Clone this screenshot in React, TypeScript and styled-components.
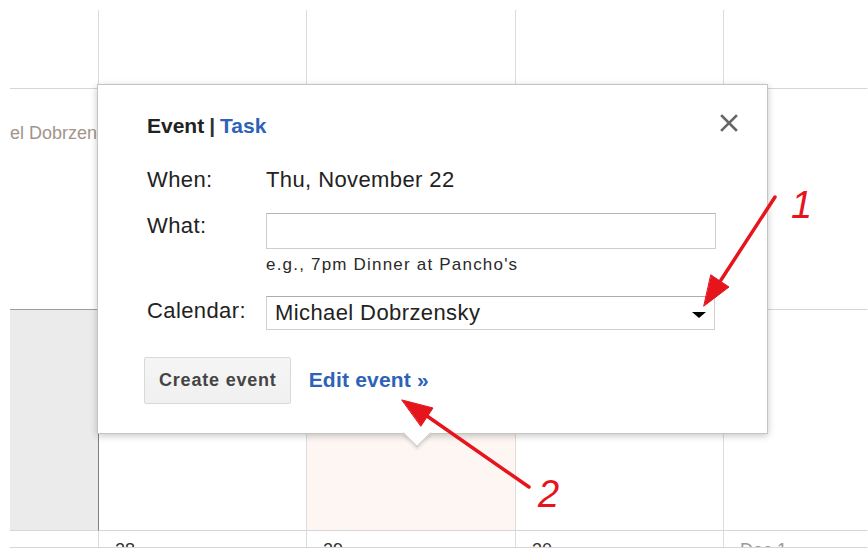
import React from 'react';
import styled, { createGlobalStyle } from 'styled-components';

const GlobalStyle = createGlobalStyle`
  html, body {
    margin: 0;
    padding: 0;
    background: #ffffff;
  }
  body {
    width: 868px;
    height: 548px;
    overflow: hidden;
    font-family: "Liberation Sans", Arial, sans-serif;
    color: #222;
  }
`;

type Tone = 'plain' | 'muted' | 'today';

const weeks: { tone?: Tone; day?: string; dim?: boolean; chip?: string; last?: boolean }[][] = [
  [{}, {}, {}, {}, { last: true }],
  [{ chip: 'Michael Dobrzensky' }, {}, {}, {}, { last: true }],
  [{ tone: 'muted' }, {}, { tone: 'today' }, {}, { last: true }],
  [{}, { day: '28' }, { day: '29' }, { day: '30' }, { day: 'Dec 1', dim: true, last: true }],
];

export default function App() {
  return (
    <>
      <GlobalStyle />
      <Page>
        <MonthGrid>
          {weeks.map((week, w) =>
            week.map((cell, d) => (
              <Cell key={`${w}-${d}`} $tone={cell.tone} $last={cell.last}>
                {cell.chip && <EventChip>{cell.chip}</EventChip>}
                {cell.day && <DayNumber $dim={cell.dim}>{cell.day}</DayNumber>}
              </Cell>
            ))
          )}
        </MonthGrid>

        <Bubble>
          <BubbleHeader>
            <Tabs>
              <ActiveTab>Event</ActiveTab>
              <TabDivider>|</TabDivider>
              <TabLink>Task</TabLink>
            </Tabs>
            <CloseButton aria-label="Close">
              <svg width="20" height="20" viewBox="0 0 20 20">
                <path d="M3 3 L17 17 M17 3 L3 17" stroke="#666" strokeWidth="2.6" strokeLinecap="square" />
              </svg>
            </CloseButton>
          </BubbleHeader>

          <FieldRow $mt={29}>
            <Label>When:</Label>
            <Value>Thu, November 22</Value>
          </FieldRow>

          <FieldRow $mt={20}>
            <Label>What:</Label>
            <TextInput type="text" />
          </FieldRow>

          <FieldRow $mt={6}>
            <span />
            <Hint>e.g., 7pm Dinner at Pancho's</Hint>
          </FieldRow>

          <FieldRow $mt={21}>
            <Label $pt={2}>Calendar:</Label>
            <CalendarSelect>
              <span>Michael Dobrzensky</span>
              <Caret />
            </CalendarSelect>
          </FieldRow>

          <Actions>
            <CreateButton>Create event</CreateButton>
            <EditLink>Edit event »</EditLink>
          </Actions>

          <Tail />
        </Bubble>

        <Annotations width="868" height="548" viewBox="0 0 868 548">
          <g fill="#e5141d" stroke="#e5141d" strokeLinecap="round">
            <line x1="775" y1="197" x2="721" y2="280" strokeWidth="3.5" />
            <polygon points="704,306 729,287 711,275" strokeWidth="1" />
            <line x1="529" y1="487" x2="427" y2="416" strokeWidth="3.5" />
            <polygon points="402,400 433,408 421,426" strokeWidth="1" />
          </g>
        </Annotations>
        <Callout $left={791} $top={186}>1</Callout>
        <Callout $left={538} $top={475}>2</Callout>
      </Page>
    </>
  );
}

const Page = styled.div`
  position: relative;
  width: 868px;
  height: 548px;
  padding: 10px 0 0 10px;
  box-sizing: border-box;
  overflow: hidden;
`;

const MonthGrid = styled.div`
  display: grid;
  grid-template-columns: 89px 208px 209px 208px 1fr;
  grid-template-rows: 79px 221px 221px 1fr;
  height: 100%;
`;

const Cell = styled.div<{ $tone?: Tone; $last?: boolean }>`
  box-sizing: border-box;
  overflow: hidden;
  border-right: 1px solid ${p => (p.$last ? 'transparent' : p.$tone === 'muted' ? '#808080' : '#dcdcdc')};
  border-bottom: 1px solid #d6d6d6;
  background: ${p => (p.$tone === 'muted' ? '#ebebeb' : p.$tone === 'today' ? '#fdf6f3' : '#ffffff')};
  box-shadow: ${p => (p.$tone === 'muted' ? '0 -1px 0 #9c9c9c' : 'none')};
  min-width: 0;
`;

const EventChip = styled.div`
  margin: 33px 0 0 -48px;
  font-size: 18px;
  line-height: 22px;
  color: #a3948a;
  white-space: nowrap;
`;

const DayNumber = styled.div<{ $dim?: boolean }>`
  padding: 8px 0 0 16px;
  font-size: 18px;
  line-height: 22px;
  color: ${p => (p.$dim ? '#9a9a9a' : '#333')};
`;

const Bubble = styled.div`
  position: absolute;
  left: 97px;
  top: 84px;
  width: 671px;
  box-sizing: border-box;
  padding: 29px 28px 29px 49px;
  background: #fff;
  border: 1px solid #c4c4c4;
  box-shadow: 0 2px 7px rgba(0, 0, 0, 0.22);
`;

const BubbleHeader = styled.div`
  display: flex;
  justify-content: space-between;
  align-items: flex-start;
  height: 24px;
`;

const Tabs = styled.div`
  font-size: 21px;
  line-height: 24px;
  font-weight: bold;
  white-space: nowrap;
`;

const ActiveTab = styled.span`
  color: #222;
`;

const TabDivider = styled.span`
  color: #333;
  margin: 0 5px;
`;

const TabLink = styled.span`
  color: #2d63b7;
`;

const CloseButton = styled.div`
  width: 20px;
  height: 20px;
  margin-top: -1px;
  svg {
    display: block;
  }
`;

const FieldRow = styled.div<{ $mt: number }>`
  display: grid;
  grid-template-columns: 119px 450px;
  align-items: start;
  margin-top: ${p => p.$mt}px;
`;

const Label = styled.div<{ $pt?: number }>`
  padding-top: ${p => p.$pt ?? 0}px;
  font-size: 22px;
  line-height: 26px;
  letter-spacing: 0.4px;
  color: #222;
`;

const Value = styled.div`
  font-size: 22px;
  line-height: 26px;
  letter-spacing: 0.4px;
  color: #222;
  white-space: nowrap;
`;

const TextInput = styled.input`
  display: block;
  width: 450px;
  height: 36px;
  box-sizing: border-box;
  margin: 0;
  padding: 0 8px;
  border: 1px solid #cdcdcd;
  border-top-color: #b4b4b4;
  border-radius: 0;
  background: #fff;
  font-family: "Liberation Sans", Arial, sans-serif;
  font-size: 20px;
  outline: none;
`;

const Hint = styled.div`
  font-size: 17px;
  line-height: 20px;
  letter-spacing: 1.2px;
  color: #2a2a2a;
  white-space: nowrap;
`;

const CalendarSelect = styled.div`
  display: flex;
  align-items: center;
  justify-content: space-between;
  width: 449px;
  height: 34px;
  box-sizing: border-box;
  padding: 0 8px 0 8px;
  border: 1px solid #d0d0d0;
  border-top-color: #acacac;
  background: #fff;
  font-size: 22px;
  letter-spacing: 0.4px;
  color: #222;
  white-space: nowrap;
`;

const Caret = styled.span`
  width: 0;
  height: 0;
  margin-top: 4px;
  border-left: 7px solid transparent;
  border-right: 7px solid transparent;
  border-top: 6px solid #000;
`;

const Actions = styled.div`
  display: flex;
  align-items: center;
  margin-top: 27px;
  margin-left: -3px;
`;

const CreateButton = styled.div`
  display: flex;
  align-items: center;
  height: 47px;
  box-sizing: border-box;
  padding: 0 13px 0 14px;
  border: 1px solid #d9d9d9;
  border-radius: 2px;
  background: linear-gradient(#f5f5f5, #f0f0f0);
  font-size: 18px;
  font-weight: bold;
  letter-spacing: 0.8px;
  color: #444;
  white-space: nowrap;
`;

const EditLink = styled.div`
  margin-left: 18px;
  margin-top: -2px;
  font-size: 21px;
  font-weight: bold;
  letter-spacing: 0.2px;
  color: #2d63b7;
  white-space: nowrap;
`;

const Tail = styled.div`
  position: absolute;
  left: 309px;
  bottom: -10px;
  width: 19px;
  height: 19px;
  background: #fff;
  border-right: 1px solid #c8c8c8;
  border-bottom: 1px solid #c8c8c8;
  box-shadow: 2px 2px 3px rgba(0, 0, 0, 0.1);
  transform: rotate(45deg);
`;

const Annotations = styled.svg`
  position: absolute;
  left: 0;
  top: 0;
  pointer-events: none;
`;

const Callout = styled.span<{ $left: number; $top: number }>`
  position: absolute;
  left: ${p => p.$left}px;
  top: ${p => p.$top}px;
  font-size: 38px;
  line-height: 38px;
  font-style: italic;
  color: #e5141d;
`;
